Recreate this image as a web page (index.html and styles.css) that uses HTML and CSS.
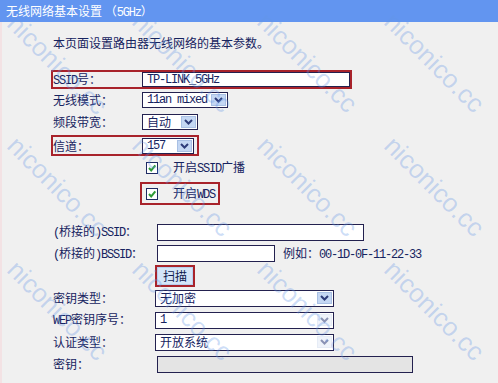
FILE: index.html
```html
<!DOCTYPE html>
<html lang="zh-CN">
<head>
<meta charset="utf-8">
<title>无线网络基本设置</title>
<link rel="stylesheet" href="styles.css">
</head>
<body>
<div class="page">
  <div class="header">无线网络基本设置 （<span class="a">5GHz</span>）</div>
  <div class="content">
    <p class="intro">本页面设置路由器无线网络的基本参数。</p>

    <div class="row hl r-ssid">
      <span class="lbl w1"><span class="a">SSID</span>号：</span>
      <span class="field f-ssid"><span class="a">TP-LINK_5GHz</span></span>
    </div>
    <div class="row r22">
      <span class="lbl w1">无线模式：</span>
      <span class="sel s-mode"><span class="a">11an mixed</span><span class="arr"><svg width="9" height="6" viewBox="0 0 9 6"><path d="M1 1 L4.5 4.5 L8 1" stroke="#2d3b78" stroke-width="2" fill="none"/></svg></span></span>
    </div>
    <div class="row r22">
      <span class="lbl w1">频段带宽：</span>
      <span class="sel s-bw">自动<span class="arr"><svg width="9" height="6" viewBox="0 0 9 6"><path d="M1 1 L4.5 4.5 L8 1" stroke="#2d3b78" stroke-width="2" fill="none"/></svg></span></span>
    </div>
    <div class="row hl r-ch">
      <span class="lbl w1">信道：</span>
      <span class="sel s-ch"><span class="a">157</span><span class="arr"><svg width="9" height="6" viewBox="0 0 9 6"><path d="M1 1 L4.5 4.5 L8 1" stroke="#2d3b78" stroke-width="2" fill="none"/></svg></span></span>
    </div>
    <div class="row r-ck1">
      <span class="spacer w-ck"></span>
      <span class="ckwrap">
        <span class="ck"><svg width="10" height="10" viewBox="0 0 10 10"><path d="M2 5 L4.2 7.4 L8.3 2.4" stroke="#2f9a35" stroke-width="2" fill="none"/></svg></span>
        <span class="cktext">开启<span class="a">SSID</span>广播</span>
      </span>
    </div>
    <div class="row r-ck2">
      <span class="spacer w-ck"></span>
      <span class="ckwrap hlbox">
        <span class="ck"><svg width="10" height="10" viewBox="0 0 10 10"><path d="M2 5 L4.2 7.4 L8.3 2.4" stroke="#2f9a35" stroke-width="2" fill="none"/></svg></span>
        <span class="cktext">开启<span class="a">WDS</span></span>
      </span>
    </div>

    <div class="row r22 r-bssid1">
      <span class="lbl w2"><span class="a">(</span>桥接的<span class="a">)SSID</span>：</span>
      <span class="field f-bssid"></span>
    </div>
    <div class="row r21">
      <span class="lbl w2"><span class="a">(</span>桥接的<span class="a">)BSSID</span>：</span>
      <span class="field f-mac"></span>
      <span class="hint">例如：<span class="a">00-1D-0F-11-22-33</span></span>
    </div>
    <div class="row r-scan">
      <span class="spacer w3"></span>
      <span class="scanbox"><span class="btn">扫描</span></span>
    </div>
    <div class="row r22">
      <span class="lbl w3">密钥类型：</span>
      <span class="sel s-key">无加密<span class="arr"><svg width="9" height="6" viewBox="0 0 9 6"><path d="M1 1 L4.5 4.5 L8 1" stroke="#2d3b78" stroke-width="2" fill="none"/></svg></span></span>
    </div>
    <div class="row r22">
      <span class="lbl w3"><span class="a">WEP</span>密钥序号：</span>
      <span class="sel s-key"><span class="a">1</span><span class="arr off"><svg width="9" height="6" viewBox="0 0 9 6"><path d="M1 1 L4.5 4.5 L8 1" stroke="#2d3b78" stroke-width="2" fill="none"/></svg></span></span>
    </div>
    <div class="row r22">
      <span class="lbl w3">认证类型：</span>
      <span class="sel s-key">开放系统<span class="arr off"><svg width="9" height="6" viewBox="0 0 9 6"><path d="M1 1 L4.5 4.5 L8 1" stroke="#2d3b78" stroke-width="2" fill="none"/></svg></span></span>
    </div>
    <div class="row r22">
      <span class="lbl w2">密钥：</span>
      <span class="field f-pass dis"></span>
    </div>
  </div>

  <div class="wm-layer" aria-hidden="true">
    <span class="wm" style="left:12px;top:19px">niconico.cc</span>
    <span class="wm" style="left:137px;top:17px">niconico.cc</span>
    <span class="wm" style="left:262px;top:17px">niconico.cc</span>
    <span class="wm" style="left:389px;top:17px">niconico.cc</span>
    <span class="wm" style="left:12px;top:141px">niconico.cc</span>
    <span class="wm" style="left:137px;top:141px">niconico.cc</span>
    <span class="wm" style="left:262px;top:141px">niconico.cc</span>
    <span class="wm" style="left:389px;top:141px">niconico.cc</span>
    <span class="wm" style="left:12px;top:265px">niconico.cc</span>
    <span class="wm" style="left:137px;top:265px">niconico.cc</span>
    <span class="wm" style="left:262px;top:265px">niconico.cc</span>
    <span class="wm" style="left:389px;top:265px">niconico.cc</span>
  </div>
</div>
</body>
</html>
```

FILE: styles.css
```css
html, body {
  margin: 0;
  padding: 0;
}
body {
  width: 498px;
  height: 383px;
  overflow: hidden;
  background: #f0f0f0;
  font-family: "Noto Sans CJK SC", "Liberation Sans", sans-serif;
  font-size: 12px;
  color: #16235f;
}
.page {
  position: relative;
  width: 498px;
  height: 383px;
  overflow: hidden;
  box-shadow: inset 2px 0 #f3e2e4;
}
.a {
  font-family: "Liberation Mono", monospace;
  font-size: 12px;
  letter-spacing: -1.2px;
}
.header {
  height: 22px;
  line-height: 22px;
  background: #6295f0;
  color: #ffffff;
  padding-left: 6px;
  font-size: 12px;
}
.content {
  padding-left: 51px;
}
.intro {
  margin: 13px 0 0 2px;
  height: 16px;
  line-height: 16px;
}
.row {
  display: flex;
  align-items: center;
  box-sizing: border-box;
  padding-left: 2px;
  line-height: 16px;
  white-space: nowrap;
}
.hl {
  border: 2px solid #a8232b;
  padding-left: 0;
}
.r22 { height: 22px; }
.r21 { height: 21px; }
.r-ssid {
  margin-top: 19px;
  height: 19px;
  width: 301px;
}
.r-ch {
  margin-top: 2px;
  height: 21px;
  width: 148px;
}
.r-ck1 { height: 24px; }
.r-ck2 { margin-top: 2px; height: 23px; }
.r-bssid1 { margin-top: 16px; }
.r-scan { margin-top: 1px; height: 22px; }

.lbl { flex: none; }
.w1 { width: 89px; }
.w2 { width: 104px; }
.w3 { width: 102px; }
.spacer { flex: none; }
.w-ck { width: 87px; }

.field {
  flex: none;
  box-sizing: border-box;
  height: 17px;
  border: 1px solid #23214f;
  background: #ffffff;
  padding-left: 4px;
  display: flex;
  align-items: center;
}
.f-ssid { width: 208px; height: 15px; }
.f-bssid { width: 207px; }
.f-mac { width: 118px; }
.f-pass { width: 256px; }
.dis { background: #e4e4e4; }

.hint { margin-left: 8px; }

.sel {
  flex: none;
  box-sizing: border-box;
  height: 16px;
  border: 1px solid #23214f;
  background: #ffffff;
  padding-left: 4px;
  display: flex;
  align-items: center;
  justify-content: space-between;
}
.s-mode { width: 86px; }
.s-bw { width: 56px; }
.s-ch { width: 52px; }
.s-key { width: 179px; height: 17px; }
.arr {
  box-sizing: border-box;
  width: 15px;
  height: 12px;
  margin-right: 1px;
  background: #c4d7f3;
  border: 1px solid #a9c0e4;
  display: flex;
  align-items: center;
  justify-content: center;
}
.arr.off {
  background: #e3ebf6;
  border-color: #d3def0;
  opacity: 0.55;
}

.ckwrap {
  display: flex;
  align-items: center;
  box-sizing: border-box;
  height: 23px;
  border: 2px solid transparent;
  padding: 0 3px 0 4px;
}
.hlbox { border-color: #a8232b; }
.ck {
  box-sizing: border-box;
  width: 12px;
  height: 12px;
  border: 1px solid #1f2b63;
  background: #ffffff;
  display: flex;
  align-items: center;
  justify-content: center;
}
.cktext { margin-left: 15px; }

.scanbox {
  box-sizing: border-box;
  width: 40px;
  height: 22px;
  border: 2px solid #a8232b;
  display: flex;
  align-items: center;
  justify-content: center;
}
.btn {
  box-sizing: border-box;
  width: 36px;
  height: 18px;
  line-height: 16px;
  text-align: center;
  background: #d4e5f8;
  border: 1px solid #b9cfee;
  color: #101a4e;
}

.wm-layer {
  position: absolute;
  inset: 0;
  pointer-events: none;
}
.wm {
  position: absolute;
  font-family: "Liberation Sans", sans-serif;
  font-size: 26px;
  line-height: 26px;
  margin-top: -13px;
  color: rgba(100, 150, 230, 0.33);
  transform-origin: 0 50%;
  transform: rotate(45deg);
  white-space: nowrap;
}
```
